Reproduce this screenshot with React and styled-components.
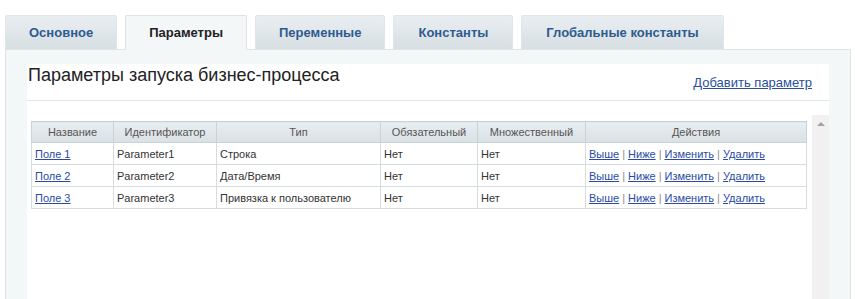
import React from "react";
import styled, { createGlobalStyle } from "styled-components";

const Global = createGlobalStyle`
  html, body { margin: 0; padding: 0; background: #fff; }
  body { font-family: "Liberation Sans", Arial, sans-serif; color: #333; }
`;

const Page = styled.div`
  padding: 15px 4px 0 5px;
  height: 299px;
  box-sizing: border-box;
  overflow: hidden;
  display: flex;
  flex-direction: column;
`;

const TabBar = styled.div`
  display: flex;
  gap: 8px;
  position: relative;
  z-index: 1;
  margin-bottom: -1px;
`;

const Tab = styled.div`
  height: 35px;
  box-sizing: border-box;
  padding: 0 ${(p) => p.$pad || 23}px;
  display: flex;
  align-items: center;
  font-size: 13px;
  font-weight: bold;
  white-space: nowrap;
  border: 1px solid ${(p) => (p.$active ? "#dce3e6" : "#dfe5e8")};
  border-bottom: ${(p) => (p.$active ? "1px solid #f4f7f8" : "1px solid #dfe5e8")};
  border-radius: 2px 2px 0 0;
  color: ${(p) => (p.$active ? "#222" : "#2e5b90")};
  background: ${(p) =>
    p.$active ? "#f4f7f8" : "linear-gradient(#e9eef1, #d7dfe3)"};
`;

const Panel = styled.div`
  flex: 1;
  border: 1px solid #dde4e7;
  border-bottom: none;
  background: #f4f7f8;
  padding: 14px 21px 0 21px;
  display: flex;
  flex-direction: column;
`;

const Box = styled.div`
  flex: 1;
  background: #fff;
  display: flex;
  flex-direction: column;
`;

const BoxHeader = styled.div`
  height: 37px;
  box-sizing: border-box;
  border-bottom: 1px solid #e2e6e8;
  display: flex;
  justify-content: space-between;
  align-items: flex-start;
  padding: 0 17px 0 1px;
`;

const Title = styled.h2`
  margin: 0;
  padding-top: 1px;
  font-size: 18px;
  font-weight: normal;
  line-height: 20px;
  color: #222;
`;

const AddLink = styled.a`
  margin-top: 11px;
  font-size: 13px;
  line-height: 15px;
  color: #2a4f9c;
  text-decoration: underline;
  cursor: pointer;
`;

const ScrollArea = styled.div`
  flex: 1;
  margin-top: 14px;
  display: flex;
`;

const ScrollContent = styled.div`
  flex: 1;
  padding: 6px 0 0 4px;
`;

const ScrollTrack = styled.div`
  width: 17px;
  background: #f1f1f1;
  display: flex;
  justify-content: center;
  padding-top: 7px;
  box-sizing: border-box;
`;

const ArrowUp = styled.div`
  width: 0;
  height: 0;
  border-left: 4px solid transparent;
  border-right: 4px solid transparent;
  border-bottom: 4px solid #a3a3a3;
`;

const Table = styled.table`
  width: 775px;
  table-layout: fixed;
  border-collapse: collapse;
  border: 1px solid #c8d2d7;
  font-size: 11px;
  line-height: 14px;
`;

const Th = styled.th`
  box-sizing: border-box;
  height: 21px;
  padding: 0 4px;
  font-weight: normal;
  color: #555;
  text-align: center;
  background: linear-gradient(#e8eef1, #d9e1e5);
  border: 1px solid #c8d2d7;
  white-space: nowrap;
  overflow: hidden;
`;

const Td = styled.td`
  box-sizing: border-box;
  height: 22px;
  padding: 0 3px;
  color: #333;
  border: 1px solid #d6dde1;
  white-space: nowrap;
  overflow: hidden;
`;

const Link = styled.a`
  color: #2a4aa6;
  text-decoration: underline;
  cursor: pointer;
`;

const Sep = styled.span`
  color: #8b8b8b;
  padding: 0 3px;
`;

const cols = [82, 103, 164, 97, 108, 221];
const headers = ["Название", "Идентификатор", "Тип", "Обязательный", "Множественный", "Действия"];
const rows = [
  ["Поле 1", "Parameter1", "Строка", "Нет", "Нет"],
  ["Поле 2", "Parameter2", "Дата/Время", "Нет", "Нет"],
  ["Поле 3", "Parameter3", "Привязка к пользователю", "Нет", "Нет"],
];
const actions = ["Выше", "Ниже", "Изменить", "Удалить"];

export default function App() {
  return (
    <>
      <Global />
      <Page>
        <TabBar>
          <Tab>Основное</Tab>
          <Tab $active>Параметры</Tab>
          <Tab>Переменные</Tab>
          <Tab $pad={24}>Константы</Tab>
          <Tab $pad={24}>Глобальные константы</Tab>
        </TabBar>
        <Panel>
          <Box>
            <BoxHeader>
              <Title>Параметры запуска бизнес-процесса</Title>
              <AddLink>Добавить параметр</AddLink>
            </BoxHeader>
            <ScrollArea>
              <ScrollContent>
                <Table>
                  <colgroup>
                    {cols.map((w, i) => (
                      <col key={i} style={{ width: w }} />
                    ))}
                  </colgroup>
                  <thead>
                    <tr>
                      {headers.map((h) => (
                        <Th key={h}>{h}</Th>
                      ))}
                    </tr>
                  </thead>
                  <tbody>
                    {rows.map((r) => (
                      <tr key={r[0]}>
                        <Td>
                          <Link>{r[0]}</Link>
                        </Td>
                        <Td>{r[1]}</Td>
                        <Td>{r[2]}</Td>
                        <Td>{r[3]}</Td>
                        <Td>{r[4]}</Td>
                        <Td>
                          {actions.map((a, i) => (
                            <React.Fragment key={a}>
                              {i > 0 && <Sep>|</Sep>}
                              <Link>{a}</Link>
                            </React.Fragment>
                          ))}
                        </Td>
                      </tr>
                    ))}
                  </tbody>
                </Table>
              </ScrollContent>
              <ScrollTrack>
                <ArrowUp />
              </ScrollTrack>
            </ScrollArea>
          </Box>
        </Panel>
      </Page>
    </>
  );
}
